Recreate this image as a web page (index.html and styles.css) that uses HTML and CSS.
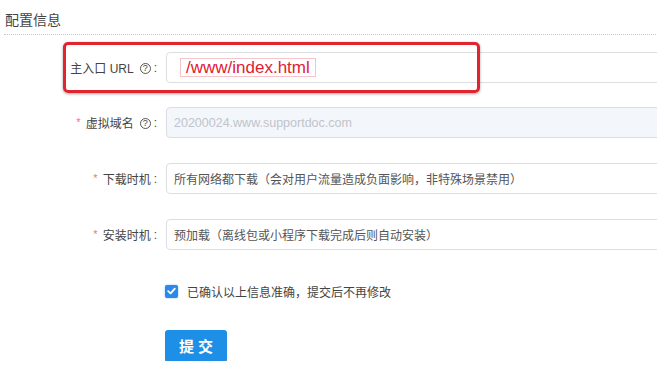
FILE: index.html
```html
<!DOCTYPE html>
<html lang="zh-CN">
  <head>
    <meta charset="UTF-8" />
    <meta name="viewport" content="width=device-width, initial-scale=1.0" />
    <title>配置信息</title>
    <link rel="stylesheet" href="styles.css">
  </head>
  <body>
    <div class="panel">
      <h3 class="panel-title">配置信息</h3>

      <form class="form">
        <!-- 主入口 -->
        <div class="form-item form-item-url">
          <label class="form-label">主入口 URL<span class="help">?</span><span class="colon">:</span></label>
          <div class="form-control">
            <div class="input">
              <span class="url-mark">/www/index.html</span>
            </div>
          </div>
          <div class="annotate"></div>
        </div>

        <div class="form-item">
          <label class="form-label"><span class="req">*</span>虚拟域名<span class="help">?</span><span class="colon">:</span></label>
          <div class="form-control">
            <input class="input input-disabled" type="text" placeholder="20200024.www.supportdoc.com" disabled />
          </div>
        </div>

        <div class="form-item">
          <label class="form-label"><span class="req">*</span>下载时机<span class="colon">:</span></label>
          <div class="form-control">
            <div class="input">所有网络都下载（会对用户流量造成负面影响，非特殊场景禁用）</div>
          </div>
        </div>

        <div class="form-item">
          <label class="form-label"><span class="req">*</span>安装时机<span class="colon">:</span></label>
          <div class="form-control">
            <div class="input">预加载（离线包或小程序下载完成后则自动安装）</div>
          </div>
        </div>

        <div class="form-check">
          <span class="checkbox">
            <svg width="9" height="8" viewBox="0 0 9 8">
              <path d="M1.2 4.2 L3.6 6.4 L7.8 1.6" fill="none" stroke="#fff" stroke-width="1.8" stroke-linecap="round" stroke-linejoin="round" />
            </svg>
          </span>
          <span class="check-text">已确认以上信息准确，提交后不再修改</span>
        </div>

        <div class="form-actions">
          <button type="button" class="btn-primary">提 交</button>
        </div>
      </form>
    </div>
  </body>
</html>
```

FILE: styles.css
```css
* {
  margin: 0;
  padding: 0;
  box-sizing: border-box;
}

body {
  font-family: "Liberation Sans", "Noto Sans CJK SC", sans-serif;
  background-color: #fff;
  color: #444;
  font-size: 12px;
  overflow: hidden;
}

.panel {
  width: 760px;
}

.panel-title {
  font-size: 14px;
  font-weight: normal;
  color: #444;
  line-height: 20px;
  margin: 10px 0 0 4px;
  padding: 0 0 4px 1px;
  border-bottom: 1px dotted #c8c8c8;
}

.form {
  padding-top: 17px;
}

.form-item {
  position: relative;
  display: flex;
  align-items: center;
  height: 31px;
  margin-bottom: 25px;
}

.form-item-url {
  margin-bottom: 24px;
}

.form-label {
  display: flex;
  align-items: center;
  justify-content: flex-end;
  width: 158px;
  padding-right: 1px;
  color: #444;
  font-size: 12px;
  white-space: pre;
}

.req {
  color: #f07575;
  font-size: 11px;
  margin-right: 5px;
  position: relative;
  top: -1px;
}

.help {
  display: inline-flex;
  align-items: center;
  justify-content: center;
  flex: none;
  width: 11px;
  height: 11px;
  border: 1px solid #555;
  border-radius: 50%;
  font-size: 9px;
  line-height: 1;
  color: #444;
  margin-left: 6px;
  margin-top: 2px;
}

.colon {
  margin-left: 3px;
}

.form-control {
  margin-left: 8px;
  width: 560px;
}

.input {
  display: flex;
  align-items: center;
  width: 100%;
  height: 31px;
  padding: 0 7px;
  border: 1px solid #dcdee2;
  border-radius: 4px;
  background: #fff;
  font-family: inherit;
  font-size: 12px;
  color: #555;
}

.input-disabled {
  background: #f3f6fa;
}

.input-disabled::placeholder {
  color: #c0c4cc;
  font-size: 12.5px;
}

.url-mark {
  margin-left: 6px;
  padding: 0 5px;
  height: 19px;
  line-height: 18px;
  border: 1px solid #f6c4c9;
  color: #e3202f;
  font-size: 17px;
}

/* red annotation frame over the first row */
.annotate {
  position: absolute;
  left: 63px;
  top: -10px;
  width: 417px;
  height: 51px;
  border: 3px solid #e1252f;
  border-radius: 5px;
  box-shadow: 0 1px 3px rgba(0, 0, 0, 0.35);
  pointer-events: none;
}

.form-check {
  display: flex;
  align-items: center;
  height: 20px;
  margin: 31px 0 0 165px;
}

.checkbox {
  display: flex;
  align-items: center;
  justify-content: center;
  width: 13px;
  height: 13px;
  border-radius: 2px;
  background: #2b8ae8;
  box-shadow: 0 0 2px rgba(45, 140, 240, 0.6);
}

.check-text {
  margin-left: 9px;
  color: #444;
}

.form-actions {
  margin: 29px 0 0 165px;
}

.btn-primary {
  width: 62px;
  height: 31px;
  border: none;
  border-radius: 3px;
  background-color: #1d8fe6;
  color: #fff;
  font-family: inherit;
  font-size: 15px;
  font-weight: bold;
  box-shadow: 0 2px 0 #7e8a96;
  cursor: pointer;
}

.btn-primary:hover {
  background-color: #1a80cf;
}
```
